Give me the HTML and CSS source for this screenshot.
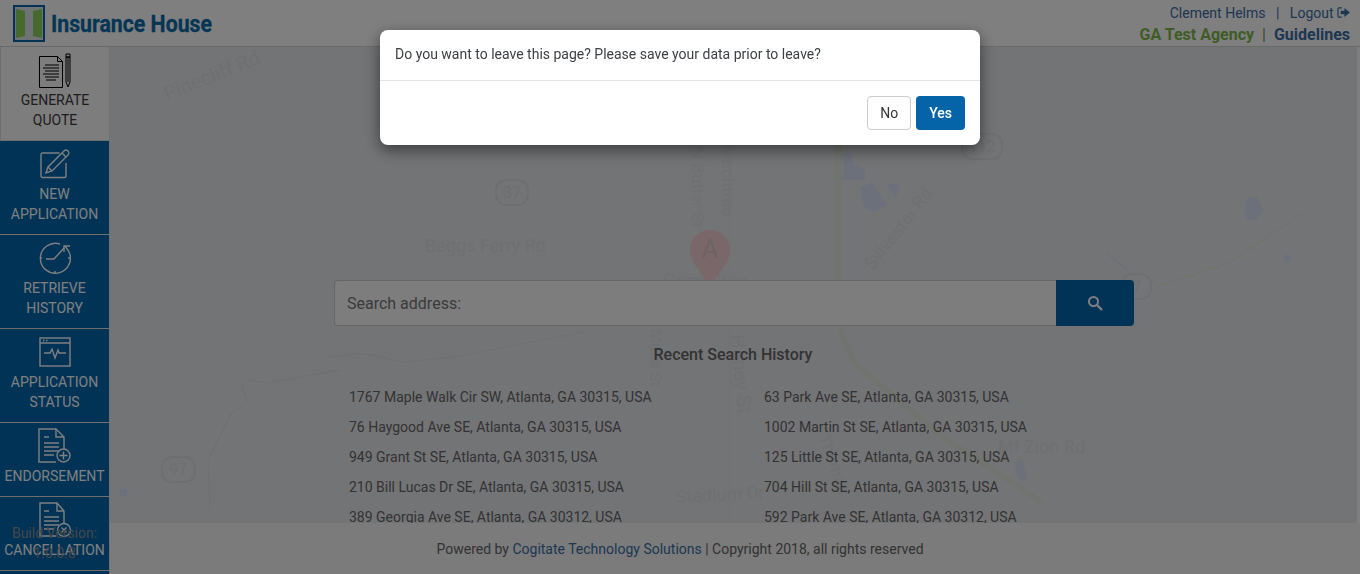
FILE: index.html
```html
<!DOCTYPE html>
<html lang="en">

<head>
  <meta charset="UTF-8">
  <meta name="viewport" content="width=device-width, initial-scale=1.0">
  <title>Insurance House</title>

  <link rel="stylesheet" href="styles.css">
</head>

<body>
  <header class="topbar">
    <a class="brand" href="#">
      <svg class="brand_mark" viewBox="0 0 32 37" width="32" height="37">
        <rect width="32" height="37" fill="#0066ac" />
        <rect x="2" y="2" width="28" height="33" fill="#dfe6ea" />
        <path d="M3 4l9 2v25l-9 2z" fill="#8cd25a" />
        <path d="M29 4l-9 2v25l9 2z" fill="#8cd25a" />
      </svg>
      <span class="brand_name">Insurance House</span>
    </a>
    <div class="account">
      <div class="account_user">
        <a href="#">Clement Helms</a>
        <span class="sep">|</span>
        <a href="#">Logout
          <svg viewBox="0 0 14 12" width="13" height="11">
            <path d="M5 1H2a1 1 0 0 0-1 1v8a1 1 0 0 0 1 1h3" fill="none" stroke="currentColor" stroke-width="1.3" />
            <path d="M4 4h4V1l6 5-6 5V8H4z" fill="currentColor" />
          </svg>
        </a>
      </div>
      <div class="account_agency">
        <a class="agency" href="#">GA Test Agency</a>
        <span class="sep">|</span>
        <a href="#">Guidelines</a>
      </div>
    </div>
  </header>

  <div class="layout">
    <nav class="sidebar">
      <a class="nav_item active" href="#">
        <span class="nav_icon">
          <svg viewBox="0 0 34 35" width="34" height="35" fill="none" stroke="currentColor">
            <path d="M1.500 3.500h18l5 5v26h-23z" />
            <path d="M19.500 3.500v5h5" />
            <path d="M7 12h14M5 15h16M7 18h14M5 21h16M7 24h14M8 27h10" />
            <path d="M28 4h4v25l-2 5-2-5zM28 1h4v3h-4z" />
            <path d="M30 4v25" />
          </svg>
        </span>
        <span>GENERATE<br>QUOTE</span>
      </a>
      <a class="nav_item" href="#">
        <span class="nav_icon">
          <svg viewBox="0 0 30 30" width="30" height="30" fill="none" stroke="currentColor" stroke-width="1.400">
            <path d="M26 14v13a1.500 1.500 0 0 1-1.500 1.500h-22A1.500 1.500 0 0 1 1 27V5.500A1.500 1.500 0 0 1 2.500 4h17" />
            <path d="M6 24l2-6L24 2a2.500 2.500 0 0 1 4 4L12 22z" />
            <path d="M8 18l4 4M22 4l4 4" />
          </svg>
        </span>
        <span>NEW<br>APPLICATION</span>
      </a>
      <a class="nav_item" href="#">
        <span class="nav_icon">
          <svg viewBox="0 0 32 32" width="32" height="32" fill="none" stroke="currentColor" stroke-width="1.400">
            <path d="M21 2A15 15 0 1 0 29.500 9L26 4" />
            <path d="M25 10V4h6" />
            <path d="M7 17h8l10-11" />
            <path d="M16 29v2M1 16h2M29 16h2" />
          </svg>
        </span>
        <span>RETRIEVE<br>HISTORY</span>
      </a>
      <a class="nav_item" href="#">
        <span class="nav_icon">
          <svg viewBox="0 0 32 30" width="32" height="30" fill="none" stroke="currentColor" stroke-width="1.400">
            <rect x="1" y="1" width="30" height="28" />
            <path d="M1 6h30M4 3.500h1.500M7 3.500h1.500" />
            <path d="M5 16h6l2-4 3 9 3-8 1 3h7" />
          </svg>
        </span>
        <span>APPLICATION<br>STATUS</span>
      </a>
      <a class="nav_item" href="#">
        <span class="nav_icon">
          <svg viewBox="0 0 34 36" width="34" height="36" fill="none" stroke="currentColor" stroke-width="1.400">
            <path d="M18 34H1V1h17l8 8v13" />
            <path d="M18 1v8h8" />
            <path d="M6 9h5M6 15h15M6 19h15M6 23h15M6 27h10" />
            <circle cx="25.500" cy="27.500" r="6.500" />
            <path d="M25.500 23.500v8M21.500 27.500h8" />
          </svg>
        </span>
        <span>ENDORSEMENT</span>
      </a>
      <a class="nav_item" href="#">
        <span class="nav_icon">
          <svg viewBox="0 0 34 36" width="34" height="36" fill="none" stroke="currentColor" stroke-width="1.400">
            <path d="M18 34H2V1h17l7 8v13" />
            <path d="M19 1v8h7" />
            <path d="M6 9h5M6 15h15M6 19h15M6 23h15M6 27h10" />
            <circle cx="26" cy="28" r="6.500" />
            <path d="M23.500 25.500l5 5M28.500 25.500l-5 5" />
          </svg>
        </span>
        <span>CANCELLATION</span>
      </a>
      <div class="build_info">Build Version:<br>1.0.0.8</div>
    </nav>

    <main class="content">
      <svg class="map" viewBox="0 0 1248 527" width="1248" height="527">
        <g fill="none" stroke="#dcdfe9" stroke-width="1">
          <path d="M230 323l-73 13-20-3-5 5 5 16-17 14-22 46 2 47" />
          <path d="M220 310l30-4 44 9 50-5 130-25" />
          <path d="M590 0v270M620 0v527" stroke="#e1e3e7" />
        </g>
        <g fill="none">
          <path d="M728 93v140" stroke="#e3e6de" stroke-width="8" />
          <path d="M729 280l15 36 89 74 100 66" stroke="#e3e6de" stroke-width="6" />
          <path d="M1047 240l72-24 78-53" stroke="#e4e7dc" stroke-width="2" />
          <path d="M997 206l20 17" stroke="#d6daea" />
        </g>
        <g fill="#d8e0f4">
          <path d="M733 106h8l3 12 11 3v12h-22z" />
          <path d="M750 140l12-4 15 22-13 7-10-5z" />
          <path d="M777 138l10-2 3 6-5 8z" />
          <path d="M1136 152l12-2 5 14-7 10-11-2z" />
          <path d="M905 415l7-3 5 18-5 4-6-8z" />
          <rect x="1174" y="208" width="7" height="6" />
          <rect x="10" y="442" width="7" height="7" />
        </g>
        <g fill="#dfe1e5" font-size="18">
          <text transform="rotate(-22 57 54)" x="57" y="54" font-size="20">Pinecliff Rd</text>
          <text x="315" y="205">Baggs Ferry Rd</text>
          <text x="553" y="241" font-size="20">Carrollton</text>
          <text transform="rotate(-52 763 224)" x="763" y="224">Sylvester Rd</text>
          <text transform="rotate(90 582 100)" x="582" y="100" font-size="17">N Butler St</text>
          <text transform="rotate(90 612 93)" x="612" y="93" font-size="17">Peachtree</text>
          <text transform="rotate(90 540 282)" x="540" y="282" font-size="16">Mulle St</text>
          <text transform="rotate(84 620 288)" x="620" y="288" font-size="20">Haney St</text>
          <text x="888" y="406">Mt Zion Rd</text>
          <text transform="rotate(70 708 390)" x="708" y="390" font-size="17">Thomas</text>
          <text transform="rotate(-3 566 456)" x="566" y="456">Stadium Dr</text>
        </g>
        <g fill="none" stroke="#dcdee2" stroke-width="2">
          <rect x="386" y="133" width="32" height="25" rx="10" />
          <rect x="52" y="410" width="33" height="25" rx="10" />
          <rect x="852" y="87" width="40" height="25" rx="10" />
          <rect x="1012" y="227" width="29" height="25" rx="10" />
        </g>
        <g fill="#dcdee2" font-size="16" text-anchor="middle">
          <text x="402" y="151">37</text>
          <text x="68" y="428">97</text>
          <text x="872" y="105">112</text>
          <text x="1027" y="245">7</text>
        </g>
        <path d="M600 183c-11 0-20 9-20 20 0 15 15 24 20 40 5-16 20-25 20-40 0-11-9-20-20-20z" fill="#f5cfd2" />
        <text x="600" y="211" font-size="26" text-anchor="middle" fill="#e0c4c8">A</text>
      </svg>

      <div class="search_panel">
        <form class="search_bar">
          <input class="search_input" type="text" placeholder="Search address:">
          <button class="search_btn" type="button" aria-label="Search">
            <svg viewBox="0 0 16 16" width="16" height="16" fill="none" stroke="#fff">
              <circle cx="6.500" cy="6.500" r="4.500" stroke-width="2" />
              <path d="M10 10l5 5" stroke-width="2.400" />
            </svg>
          </button>
        </form>
        <h2 class="recent_title">Recent Search History</h2>
        <ul class="recent_list">
          <li>1767 Maple Walk Cir SW, Atlanta, GA 30315, USA</li>
          <li>63 Park Ave SE, Atlanta, GA 30315, USA</li>
          <li>76 Haygood Ave SE, Atlanta, GA 30315, USA</li>
          <li>1002 Martin St SE, Atlanta, GA 30315, USA</li>
          <li>949 Grant St SE, Atlanta, GA 30315, USA</li>
          <li>125 Little St SE, Atlanta, GA 30315, USA</li>
          <li>210 Bill Lucas Dr SE, Atlanta, GA 30315, USA</li>
          <li>704 Hill St SE, Atlanta, GA 30315, USA</li>
          <li>389 Georgia Ave SE, Atlanta, GA 30312, USA</li>
          <li>592 Park Ave SE, Atlanta, GA 30312, USA</li>
        </ul>
      </div>
    </main>

    <footer class="page_footer">
      Powered by <a href="#">Cogitate Technology Solutions</a> | Copyright 2018, all rights reserved
    </footer>
  </div>

  <div class="backdrop"></div>

  <div class="modal">
    <div class="modal_body">Do you want to leave this page? Please save your data prior to leave?</div>
    <div class="modal_actions">
      <button class="btn btn_light" type="button">No</button>
      <button class="btn btn_primary" type="button">Yes</button>
    </div>
  </div>
</body>

</html>
```

FILE: styles.css
```css
* {
  box-sizing: border-box;
}

html,
body {
  height: 100%;
}

body {
  margin: 0;
  overflow: hidden;
  background-color: #fff;
  color: #666;
  font-family: Roboto, "Liberation Sans", sans-serif;
  font-size: 14px;
}

a {
  color: inherit;
  text-decoration: none;
}

.topbar {
  display: flex;
  justify-content: space-between;
  height: 47px;
  padding: 5px 10px 0 13px;
  border-bottom: 1px solid #d2d2d2;
  background-color: #fff;
}

.brand {
  display: flex;
  align-items: flex-start;
  gap: 6px;
}

.brand_name {
  margin-top: 6px;
  color: #0a6cac;
  font-size: 23px;
  font-weight: 700;
  -webkit-text-stroke: 0.3px #0a6cac;
  transform: scaleX(0.925);
  transform-origin: left center;
}

.account {
  margin-top: -1px;
  text-align: right;
  color: #0a5c96;
}

.account_user {
  height: 20px;
  padding-top: 1px;
  color: #3b6ea5;
}

.account_user .sep {
  margin: 0 7px;
}

.account_agency {
  margin-top: 1px;
  font-size: 16px;
  font-weight: 700;
  color: #3b6ea5;
}

.account_agency .sep {
  margin: 0 4px;
  font-weight: 400;
  color: #6f9a4e;
}

.agency {
  color: #7fb84c;
}

.layout {
  position: relative;
  display: flex;
  height: 527px;
}

.sidebar {
  position: relative;
  z-index: 1;
  flex: none;
  width: 110px;
  height: 527px;
  overflow: hidden;
  border-right: 1px solid #e0e0e0;
  background-color: #0066ac;
}

.nav_item {
  display: flex;
  flex-direction: column;
  align-items: center;
  padding-top: 3px;
  border-bottom: 1px solid #ddd;
  background-color: #0066ac;
  color: #fff;
  line-height: 20px;
  text-align: center;
  white-space: nowrap;
}

.nav_item:nth-child(1),
.nav_item:nth-child(2),
.nav_item:nth-child(3),
.nav_item:nth-child(4) {
  height: 94px;
}

.nav_item:nth-child(5),
.nav_item:nth-child(6) {
  height: 74px;
}

.nav_item.active {
  border-left: 1px solid #ddd;
  background-color: #fafafa;
  color: #3a3a3a;
}

.nav_icon {
  display: flex;
  align-items: center;
  flex: none;
  height: 40px;
}

.nav_item.active svg {
  color: #000;
}

.build_info {
  position: absolute;
  left: 0;
  right: 0;
  top: 476px;
  color: #8f8f8f;
  line-height: 20px;
  text-align: center;
}

.content {
  position: relative;
  flex: 1;
  display: flex;
  justify-content: center;
  min-width: 0;
  overflow: hidden;
  margin-right: 3px;
  background-color: #e6e8ec;
}

.map {
  position: absolute;
  top: 0;
  left: 0;
}

.search_panel {
  position: relative;
  width: 800px;
  padding-top: 233px;
  margin-left: 1px;
}

.search_bar {
  display: flex;
  height: 46px;
  margin: 0;
}

.search_input {
  flex: 1;
  min-width: 0;
  padding: 0 12px;
  border: 1px solid #ccc;
  border-right: 0;
  border-radius: 4px 0 0 4px;
  background-color: #fafafa;
  color: #666;
  font-family: inherit;
  font-size: 16px;
}

.search_input::placeholder {
  color: #777;
}

.search_btn {
  display: flex;
  align-items: center;
  justify-content: center;
  width: 78px;
  border: 0;
  border-radius: 0 4px 4px 0;
  background-color: #0066ac;
}

.recent_title {
  margin: 19px 0 18px;
  padding-right: 2px;
  color: #666;
  font-size: 16px;
  font-weight: 500;
  line-height: 19px;
  text-align: center;
}

.recent_list {
  display: grid;
  grid-template-columns: 415px 1fr;
  grid-auto-rows: 30px;
  margin: 0;
  padding: 0 0 0 15px;
  list-style: none;
  color: #666;
  line-height: 30px;
  white-space: nowrap;
}

.page_footer {
  position: absolute;
  left: 0;
  right: 0;
  bottom: 0;
  height: 51px;
  padding-top: 17px;
  background-color: #f6f6f6;
  color: #666;
  line-height: 18px;
  text-align: center;
}

.page_footer a {
  color: #3b6ea5;
}

.backdrop {
  position: fixed;
  inset: 0;
  z-index: 2;
  background-color: rgba(0, 0, 0, 0.5);
}

.modal {
  position: fixed;
  z-index: 3;
  top: 30px;
  left: 380px;
  width: 600px;
  border-radius: 8px;
  background-color: #fff;
  box-shadow: 0 5px 15px rgba(0, 0, 0, 0.5);
  color: #3d4045;
}

.modal_body {
  height: 51px;
  padding: 15px;
  border-bottom: 1px solid #e5e5e5;
  line-height: 18px;
}

.modal_actions {
  display: flex;
  justify-content: flex-end;
  gap: 5px;
  height: 64px;
  padding: 15px;
}

.btn {
  height: 34px;
  padding: 0 12px 1px;
  border: 1px solid transparent;
  border-radius: 4px;
  font-family: inherit;
  font-size: 14px;
}

.btn_light {
  border-color: #ccc;
  background-color: #fff;
  color: #333;
}

.btn_primary {
  background-color: #0564a8;
  color: #fff;
  font-weight: 500;
}
```
